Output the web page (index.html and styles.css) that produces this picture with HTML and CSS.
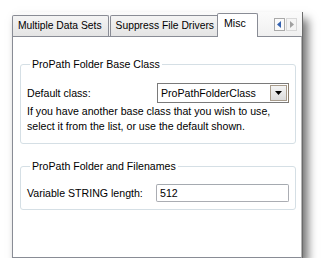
FILE: index.html
```html
<!DOCTYPE html>
<html lang="en">
<head>
  <meta charset="UTF-8">
  <title>Misc</title>
  <link rel="stylesheet" href="styles.css">
</head>
<body>
  <div class="dialog">
    <div class="tab-strip">
      <div class="tab">Multiple Data Sets</div>
      <div class="tab">Suppress File Drivers</div>
      <div class="tab active">Misc</div>
      <div class="tab-scroll">
        <span class="scroll-btn on">
          <svg width="5" height="7" viewBox="0 0 5 7"><path d="M4 0 L0 3.5 L4 7 Z" fill="#3462b0"/></svg>
        </span>
        <span class="scroll-btn">
          <svg width="5" height="7" viewBox="0 0 5 7"><path d="M1 0 L5 3.5 L1 7 Z" fill="#a0a0a0"/></svg>
        </span>
      </div>
    </div>

    <div class="panel">
      <fieldset class="group">
        <legend>ProPath Folder Base Class</legend>
        <div class="row">
          <label>Default class:</label>
          <div class="combo">
            <span class="combo-text">ProPathFolderClass</span>
            <span class="combo-btn">
              <svg width="7" height="4" viewBox="0 0 7 4"><path d="M0 0 H7 L3.5 4 Z" fill="#000"/></svg>
            </span>
          </div>
        </div>
        <p class="hint">If you have another base class that you wish to use,<br>select it from the list, or use the default shown.</p>
      </fieldset>

      <fieldset class="group second">
        <legend>ProPath Folder and Filenames</legend>
        <div class="row">
          <label>Variable STRING length:</label>
          <div class="textbox">512</div>
        </div>
      </fieldset>
    </div>
  </div>
</body>
</html>
```

FILE: styles.css
```css
body {
  margin: 0;
  background: #fff;
  font-family: "Liberation Sans", Arial, sans-serif;
  font-size: 10.6px;
  color: #000;
}
.dialog {
  margin: 12px 0 0 12px;
  width: 290px;
  box-shadow: 5px 7px 9px rgba(0, 0, 0, 0.55);
  background: #f0f0f0;
  border-right: 1px solid #6b6b6b;
}
.tab-strip {
  display: flex;
  align-items: flex-end;
  height: 24px;
  background: linear-gradient(#fbfbfb, #f0f0f0);
}
.tab {
  height: 20px;
  line-height: 20px;
  padding: 0 6px 0 5px;
  margin-right: 1px;
  border: 1px solid #898c95;
  border-bottom: none;
  border-radius: 2px 2px 0 0;
  background: linear-gradient(#f4f4f4, #e4e4e4);
  font-size: 10.3px;
  white-space: nowrap;
}
.tab.active {
  height: 23px;
  line-height: 19px;
  padding: 0 11px 0 6px;
  margin-left: -5px;
  background: #fff;
  margin-bottom: -1px;
  font-size: 10.6px;
  position: relative;
}
.tab-scroll {
  display: flex;
  gap: 1px;
  margin: 0 0 5px auto;
  padding-right: 5px;
}
.scroll-btn {
  display: flex;
  align-items: center;
  justify-content: center;
  width: 9px;
  height: 11px;
  border: 1px solid #d8d8d8;
  background: #f4f4f4;
}
.scroll-btn.on {
  border-color: #a9a9a9;
  background: #fafafa;
}
.panel {
  height: 199px;
  background: #fff;
  border: 1px solid #898c95;
  border-right-color: #b5b5b5;
  padding: 21px 5px 0 7px;
}
.group {
  margin: 0;
  padding: 13px 6px 9px 6px;
  border: 1px solid #d5dfe5;
  border-radius: 3px;
}
.group legend {
  padding: 0 2px;
  margin-left: 3px;
  color: #000;
}
.group.second {
  margin-top: 16px;
  padding-top: 12px;
  padding-bottom: 7px;
}
.row {
  display: flex;
  align-items: center;
  justify-content: space-between;
}
.combo {
  display: flex;
  align-items: center;
  width: 130px;
  height: 18px;
  border: 1px solid #7a7a7a;
  border-right-color: #8b7e6d;
}
.combo-text {
  flex: 1;
  padding-left: 3px;
}
.combo-btn {
  display: flex;
  align-items: center;
  justify-content: center;
  width: 15px;
  height: 14px;
  margin-right: 1px;
  border: 1px solid #a89c8c;
  background: linear-gradient(#f4f4f4, #dcdcdc);
}
.hint {
  margin: 1px 0 0;
  line-height: 15px;
}
.textbox {
  width: 128px;
  height: 16px;
  line-height: 16px;
  padding-left: 3px;
  border: 1px solid #abadb3;
  border-top-color: #a5aab0;
  border-radius: 2px;
}
```
